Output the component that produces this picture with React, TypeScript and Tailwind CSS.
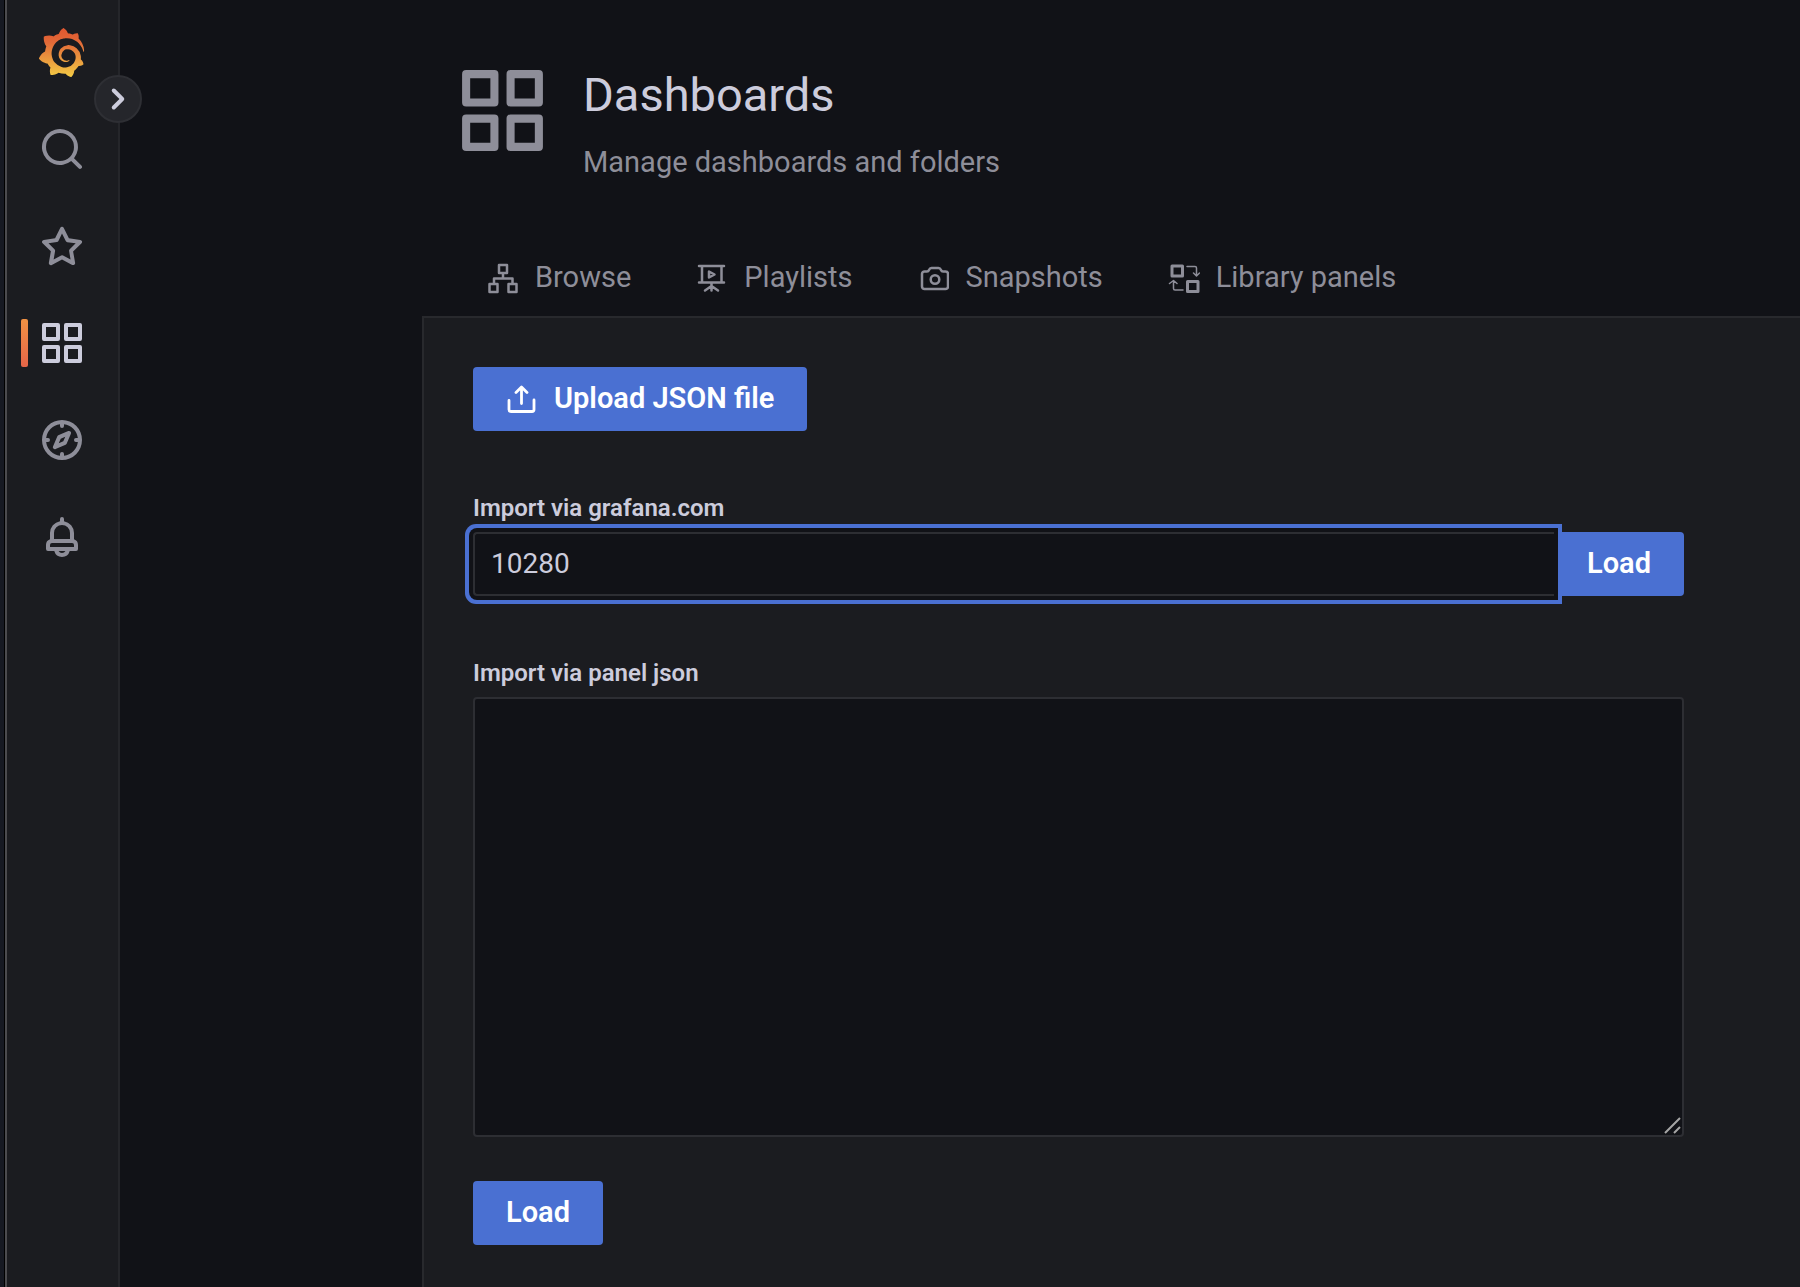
import type { ReactNode } from "react";
import { SiGrafana } from "react-icons/si";

const paths = {
  search:
    "M21.71,20.29,18,16.61A9,9,0,1,0,16.61,18l3.68,3.68a1,1,0,0,0,1.42,0A1,1,0,0,0,21.71,20.29ZM11,18a7,7,0,1,1,7-7A7,7,0,0,1,11,18Z",
  star:
    "M22,9.67A1,1,0,0,0,21.14,9l-5.69-.83L12.9,3a1,1,0,0,0-1.8,0L8.55,8.16,2.86,9a1,1,0,0,0-.81.68,1,1,0,0,0,.25,1l4.13,4-1,5.68A1,1,0,0,0,6.9,21.44L12,18.77l5.1,2.67a.93.93,0,0,0,.46.12,1,1,0,0,0,.59-.19,1,1,0,0,0,.4-1l-1-5.68,4.13-4A1,1,0,0,0,22,9.67Zm-6.15,4a1,1,0,0,0-.29.88l.72,4.2-3.76-2a1.06,1.06,0,0,0-.94,0l-3.76,2,.72-4.2a1,1,0,0,0-.29-.88l-3-3,4.21-.61a1,1,0,0,0,.76-.55L12,5.7l1.88,3.82a1,1,0,0,0,.76.55l4.21.61Z",
  apps:
    "M10,13H3a1,1,0,0,0-1,1v7a1,1,0,0,0,1,1h7a1,1,0,0,0,1-1V14A1,1,0,0,0,10,13ZM9,20H4V15H9ZM21,2H14a1,1,0,0,0-1,1v7a1,1,0,0,0,1,1h7a1,1,0,0,0,1-1V3A1,1,0,0,0,21,2ZM20,9H15V4h5Zm1,4H14a1,1,0,0,0-1,1v7a1,1,0,0,0,1,1h7a1,1,0,0,0,1-1V14A1,1,0,0,0,21,13Zm-1,7H15V15h5ZM10,2H3A1,1,0,0,0,2,3v7a1,1,0,0,0,1,1h7a1,1,0,0,0,1-1V3A1,1,0,0,0,10,2ZM9,9H4V4H9Z",
  compass:
    "M12,2A10,10,0,1,0,22,12,10,10,0,0,0,12,2Zm1,17.93V19a1,1,0,0,0-2,0v.93A8,8,0,0,1,4.07,13H5a1,1,0,0,0,0-2H4.07A8,8,0,0,1,11,4.07V5a1,1,0,0,0,2,0V4.07A8,8,0,0,1,19.93,11H19a1,1,0,0,0,0,2h.93A8,8,0,0,1,13,19.93ZM15.14,7.55l-5,2.12a1,1,0,0,0-.52.52l-2.12,5a1,1,0,0,0,.21,1.1,1,1,0,0,0,.7.3.93.93,0,0,0,.4-.09l5-2.12a1,1,0,0,0,.52-.52l2.12-5a1,1,0,0,0-1.31-1.31Zm-2.49,5.1-2.28,1,1-2.28,2.28-1Z",
  bell:
    "M18,13.18V10a6,6,0,0,0-5-5.91V3a1,1,0,0,0-2,0V4.09A6,6,0,0,0,6,10v3.18A3,3,0,0,0,4,16v2a1,1,0,0,0,1,1H8.14a4,4,0,0,0,7.72,0H19a1,1,0,0,0,1-1V16A3,3,0,0,0,18,13.18ZM8,10a4,4,0,0,1,8,0v3H8Zm4,10a2,2,0,0,1-1.72-1h3.44A2,2,0,0,1,12,20Zm6-3H6V16a1,1,0,0,1,1-1H17a1,1,0,0,1,1,1Z",
  angleRight:
    "M14.83,11.29,10.59,7.05a1,1,0,0,0-1.42,0,1,1,0,0,0,0,1.41L12.71,12,9.17,15.54a1,1,0,0,0,0,1.41,1,1,0,0,0,.71.29,1,1,0,0,0,.71-.29l4.24-4.24A1,1,0,0,0,14.83,11.29Z",
};

function Icon({ name, className }: { name: keyof typeof paths; className: string }) {
  return (
    <svg viewBox="0 0 24 24" fill="currentColor" aria-hidden="true" className={className}>
      <path d={paths[name]} />
    </svg>
  );
}

function LineIcon({ children }: { children: ReactNode }) {
  return (
    <svg
      viewBox="0 0 32 32"
      fill="none"
      stroke="currentColor"
      strokeWidth="2.5"
      strokeLinecap="round"
      strokeLinejoin="round"
      aria-hidden="true"
      className="size-8 shrink-0"
    >
      {children}
    </svg>
  );
}

const navItems: { label: string; icon: keyof typeof paths; active?: boolean }[] = [
  { label: "Search dashboards", icon: "search" },
  { label: "Starred", icon: "star" },
  { label: "Dashboards", icon: "apps", active: true },
  { label: "Explore", icon: "compass" },
  { label: "Alerting", icon: "bell" },
];

const tabs = [
  {
    label: "Browse",
    icon: (
      <LineIcon>
        <path d="M12 2h8v8h-8zM2.500 21h8v8h-8zM21.500 21h8v8h-8zM16 10v5.500M7 21v-5.500h18.500V21" />
      </LineIcon>
    ),
  },
  {
    label: "Playlists",
    icon: (
      <LineIcon>
        <path d="M3 3h25M3 19.500h25M6 3v16.500M25.500 3v16.500M15.500 19.500v8M15.500 23l-6.500 4.500M15.500 23l6.500 4.500M13 8.500v6l5.500-3z" />
      </LineIcon>
    ),
  },
  {
    label: "Snapshots",
    icon: (
      <LineIcon>
        <g transform="translate(2 0)">
          <path d="M5.500 8.500h2.500c1 0 1.600-.5 2-1.500.5-1.200 1.200-2 2.500-2h7c1.300 0 2 .8 2.500 2 .4 1 1 1.500 2 1.500h2.500a2.500 2.500 0 0 1 2.500 2.500v12.500a2.500 2.500 0 0 1-2.500 2.500h-21A2.500 2.500 0 0 1 3 23.500V11a2.500 2.500 0 0 1 2.500-2.500z" />
          <circle cx="16" cy="16.500" r="4.300" />
        </g>
      </LineIcon>
    ),
  },
  {
    label: "Library panels",
    icon: (
      <LineIcon>
        <path strokeWidth="3" d="M4 3h10.500v10H4zM19.500 18.500H30v10H19.500z" />
        <path
          strokeWidth="1.500"
          d="M19 3.500h8a1.500 1.500 0 0 1 1.500 1.500v7.500M25.500 10l3 3 3-3M15 27H7a1.500 1.500 0 0 1-1.500-1.500V18M1.500 20.500l4-3 3.500 3"
        />
      </LineIcon>
    ),
  },
];

export default function App() {
  return (
    <div className="flex min-h-screen border-l-4 border-[#161922] bg-[#111217] font-[Roboto,sans-serif] text-[29px] leading-9 text-[#ccccdc]">
      <nav
        aria-label="Main"
        className="relative ml-px flex w-[115px] shrink-0 flex-col items-center border-r-2 border-l-2 border-r-[#25262a] border-l-[#4b4b4e] bg-[#1b1c20] pt-7 pr-0.5 shadow-[-1px_0_0_#000]"
      >
        <svg width="0" height="0" aria-hidden="true" className="absolute">
          <defs>
            <linearGradient id="flame" x1="0" y1="0" x2="0" y2="1">
              <stop offset="0" stopColor="#e0562f" />
              <stop offset="0.3" stopColor="#e26a38" />
              <stop offset="1" stopColor="#f4cb45" />
            </linearGradient>
          </defs>
        </svg>
        <a href="#home" aria-label="Home" className="mb-12">
          <SiGrafana fill="url(#flame)" className="size-[49px]" />
        </a>
        <button
          type="button"
          aria-label="Expand menu"
          className="absolute top-[75px] -right-6 z-10 flex size-12 items-center justify-center rounded-full border-2 border-[#2e2f34] bg-[#25262b]"
        >
          <Icon name="angleRight" className="size-12 shrink-0" />
        </button>
        <ul className="flex w-full flex-col gap-[49px]">
          {navItems.map((item) => (
            <li key={item.label} className="relative flex justify-center">
              {item.active && (
                <span className="absolute left-3.5 h-12 w-[7px] rounded-xs bg-linear-to-b from-[#f09143] to-[#e56548]" />
              )}
              <a
                href="#nav"
                aria-label={item.label}
                className={item.active ? "text-[#ccccdc]" : "text-[#8e8e99]"}
              >
                <Icon name={item.icon} className="size-12" />
              </a>
            </li>
          ))}
        </ul>
      </nav>

      <main className="flex min-w-0 flex-1 flex-col pl-[302px]">
        <header className="flex gap-8 pt-[62px] pl-8 text-[#8e8e99]">
          <Icon name="apps" className="size-[97px] shrink-0" />
          <div className="pt-px">
            <h1 className="text-[47px] leading-[64px] text-[#ccccdc]">Dashboards</h1>
            <p className="mt-[17px]">Manage dashboards and folders</p>
          </div>
        </header>

        <nav aria-label="Dashboards" className="mt-14 flex h-20 gap-px pl-[33px] text-[#8e8e99]">
          {tabs.map((tab) => (
            <a key={tab.label} href="#tab" className="flex items-center gap-4 px-8 pt-0.5 [&>svg]:mt-1">
              {tab.icon}
              {tab.label}
            </a>
          ))}
        </nav>

        <section className="flex flex-1 flex-col items-start border-t-2 border-l-2 border-[#28292d] bg-[#1b1c20] pt-[49px] pr-[116px] pl-[49px]">
          <button
            type="button"
            className="flex h-16 items-center gap-4 rounded-[4px] bg-[#4a70d2] px-[33px] pb-0.5 font-semibold text-white"
          >
            <LineIcon>
              <path
                strokeWidth="2.8"
                d="M3 18.500V27.500a2 2 0 0 0 2 2h21a2 2 0 0 0 2-2v-9.500M15.500 21.500V5.500M10 10.500l5.500-5.500 5.500 5.500"
              />
            </LineIcon>
            Upload JSON file
          </button>

          <form className="mt-[65px] w-full">
            <label htmlFor="gcom" className="block text-2xl leading-6 font-semibold">
              Import via grafana.com
            </label>
            <div className="mt-3 flex">
              <input
                id="gcom"
                type="text"
                defaultValue="10280"
                className="relative z-10 h-16 min-w-0 flex-1 rounded-l-[4px] border-2 border-r-0 border-[#2d2e33] bg-[#111217] px-4 pb-0.5 text-[28px] shadow-[0_0_0_4px_#111217,0_0_0_8px_#4a70d2] outline-none"
              />
              <button
                type="button"
                className="h-16 rounded-r-[4px] bg-[#4a70d2] px-[33px] pb-0.5 font-semibold text-white"
              >
                Load
              </button>
            </div>
          </form>

          <form className="mt-[65px] w-full">
            <label htmlFor="json" className="block text-2xl leading-6 font-semibold">
              Import via panel json
            </label>
            <div className="relative mt-3">
              <textarea
                id="json"
                className="block h-[440px] w-full resize-none rounded-[4px] border-2 border-[#2d2e33] bg-[#111217] px-4 py-2 outline-none"
              />
              <svg
                viewBox="0 0 18 18"
                stroke="#a5a5a5"
                strokeWidth="2"
                aria-hidden="true"
                className="absolute right-[2px] bottom-[2px] size-[18px]"
              >
                <path d="M1 16 16 1M10 16l6-6" />
              </svg>
            </div>
            <button
              type="button"
              className="mt-11 h-16 rounded-[4px] bg-[#4a70d2] px-[33px] pb-0.5 font-semibold text-white"
            >
              Load
            </button>
          </form>
        </section>
      </main>
    </div>
  );
}
